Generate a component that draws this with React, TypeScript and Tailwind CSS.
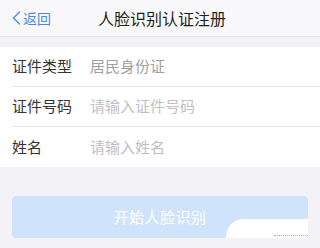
import React from "react";

const font = { fontFamily: '"Noto Sans CJK SC", "Noto Sans", sans-serif' };

function Row({ label, value, placeholder, divider }: { label: string; value: string; placeholder?: boolean; divider?: boolean }) {
  return (
    <div className="pl-[12px]">
      <div className={`flex items-center h-[40px] ${divider ? "border-b border-[#e6e6ea]" : ""}`}>
        <span className="w-[78px] text-[15px] text-[#333333]">{label}</span>
        <span className={`text-[15px] ${placeholder ? "text-[#c0c0c4]" : "text-[#a0a0a4]"}`}>{value}</span>
      </div>
    </div>
  );
}

export default function App() {
  return (
    <div className="w-[320px] h-[248px] bg-[#f3f3f7] overflow-hidden" style={font}>
      <div className="relative h-[37px] bg-[#f8f8fa] border-b border-[#e4e4e8] flex items-center">
        <div className="flex items-center pl-[12px]">
          <svg width="9" height="14" viewBox="0 0 9 14" fill="none">
            <path d="M7.5 1 L1.5 7 L7.5 13" stroke="#4a8be0" strokeWidth="1.3" strokeLinecap="round" strokeLinejoin="round" />
          </svg>
          <span className="ml-[2px] text-[14px] text-[#4a8be0]">返回</span>
        </div>
        <div className="absolute inset-0 flex items-center justify-center pointer-events-none">
          <span className="text-[16px] text-[#1f1f1f] pl-[4px]">人脸识别认证注册</span>
        </div>
      </div>
      <div className="h-[10px]" />
      <div className="bg-white">
        <Row label="证件类型" value="居民身份证" divider />
        <Row label="证件号码" value="请输入证件号码" placeholder divider />
        <Row label="姓名" value="请输入姓名" placeholder />
      </div>
      <div className="px-[12px] pt-[29px]">
        <div className="relative h-[42px] rounded-[4px] bg-[#cfe3fb] flex items-center justify-center overflow-hidden">
          <span className="text-[15px] text-white tracking-[0.5px]">开始人脸识别</span>
          <div className="absolute left-[214px] top-[23px] w-[120px] h-[30px] bg-white rounded-tl-[20px] rounded-bl-[14px]" />
          <div className="absolute left-[262px] bottom-[2px] w-[40px] border-b border-dotted border-[#7fc48a]" />
        </div>
      </div>
    </div>
  );
}
